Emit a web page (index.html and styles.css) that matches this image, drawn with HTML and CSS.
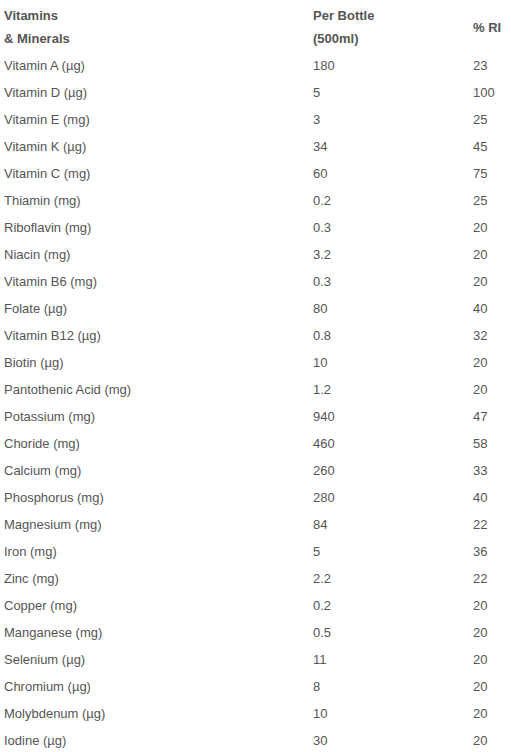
FILE: index.html
```html
<!DOCTYPE html>
<html>
<head>
<meta charset="utf-8">
<link rel="stylesheet" href="styles.css">
</head>
<body>
<table class="nutri">
<colgroup><col class="c1"><col class="c2"><col class="c3"></colgroup>
<thead>
<tr><th>Vitamins<br>&amp; Minerals</th><th>Per Bottle<br>(500ml)</th><th>% RI</th></tr>
</thead>
<tbody>
<tr><td>Vitamin A (µg)</td><td>180</td><td>23</td></tr>
<tr><td>Vitamin D (µg)</td><td>5</td><td>100</td></tr>
<tr><td>Vitamin E (mg)</td><td>3</td><td>25</td></tr>
<tr><td>Vitamin K (µg)</td><td>34</td><td>45</td></tr>
<tr><td>Vitamin C (mg)</td><td>60</td><td>75</td></tr>
<tr><td>Thiamin (mg)</td><td>0.2</td><td>25</td></tr>
<tr><td>Riboflavin (mg)</td><td>0.3</td><td>20</td></tr>
<tr><td>Niacin (mg)</td><td>3.2</td><td>20</td></tr>
<tr><td>Vitamin B6 (mg)</td><td>0.3</td><td>20</td></tr>
<tr><td>Folate (µg)</td><td>80</td><td>40</td></tr>
<tr><td>Vitamin B12 (µg)</td><td>0.8</td><td>32</td></tr>
<tr><td>Biotin (µg)</td><td>10</td><td>20</td></tr>
<tr><td>Pantothenic Acid (mg)</td><td>1.2</td><td>20</td></tr>
<tr><td>Potassium (mg)</td><td>940</td><td>47</td></tr>
<tr><td>Choride (mg)</td><td>460</td><td>58</td></tr>
<tr><td>Calcium (mg)</td><td>260</td><td>33</td></tr>
<tr><td>Phosphorus (mg)</td><td>280</td><td>40</td></tr>
<tr><td>Magnesium (mg)</td><td>84</td><td>22</td></tr>
<tr><td>Iron (mg)</td><td>5</td><td>36</td></tr>
<tr><td>Zinc (mg)</td><td>2.2</td><td>22</td></tr>
<tr><td>Copper (mg)</td><td>0.2</td><td>20</td></tr>
<tr><td>Manganese (mg)</td><td>0.5</td><td>20</td></tr>
<tr><td>Selenium (µg)</td><td>11</td><td>20</td></tr>
<tr><td>Chromium (µg)</td><td>8</td><td>20</td></tr>
<tr><td>Molybdenum (µg)</td><td>10</td><td>20</td></tr>
<tr><td>Iodine (µg)</td><td>30</td><td>20</td></tr>
</tbody>
</table>
</body>
</html>
```
FILE: styles.css
```css
html, body {
  margin: 0;
  padding: 0;
  background: #fff;
}
body {
  font-family: "Liberation Sans", Arial, sans-serif;
  font-size: 13px;
  color: #555;
}
.nutri {
  border-collapse: collapse;
  table-layout: fixed;
  width: 511px;
  margin-top: 2px;
}
.c1 { width: 309px; }
.c2 { width: 160px; }
.c3 { width: 42px; }
.nutri th, .nutri td {
  padding: 2px 4px;
  line-height: 23px;
  text-align: left;
  vertical-align: middle;
  white-space: nowrap;
}
.nutri th {
  font-weight: bold;
}
```
